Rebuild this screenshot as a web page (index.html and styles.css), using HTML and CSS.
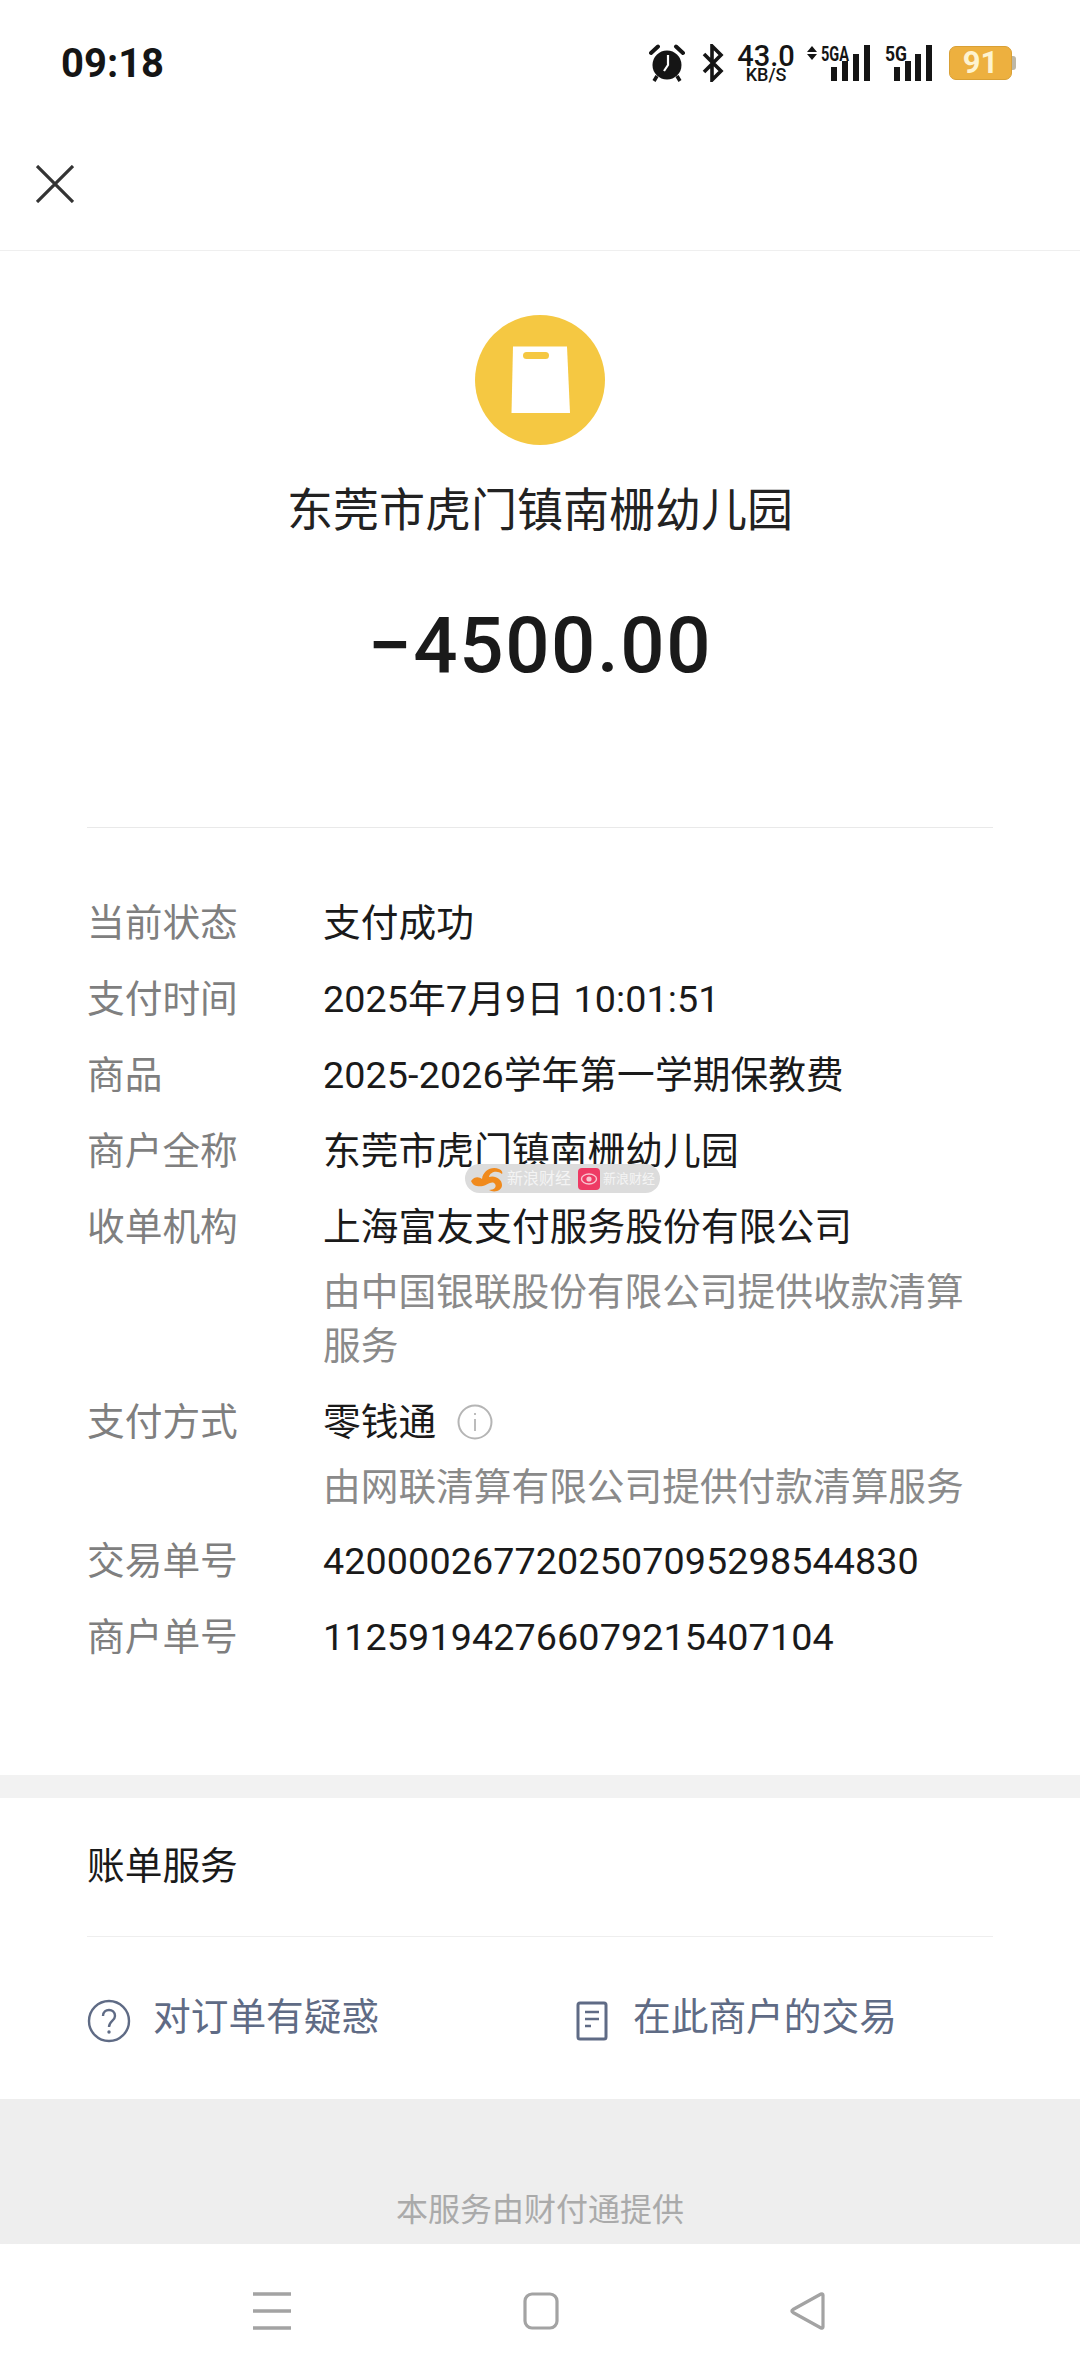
FILE: index.html
```html
<!DOCTYPE html>
<html lang="zh-CN">
<head>
  <meta charset="UTF-8" />
  <meta name="viewport" content="width=device-width, initial-scale=1.0" />
  <title>账单详情</title>
  <link rel="stylesheet" href="styles.css">
</head>
<body>

  <!-- Status bar -->
  <div class="status-bar">
    <span class="time">09:18</span>
    <div class="status-icons">
      <svg class="ic-alarm" width="36" height="38" viewBox="0 0 36 38">
        <circle cx="18" cy="21" r="14.5" fill="#151515"/>
        <path d="M2 9 L9 2.5 M34 9 L27 2.5" stroke="#151515" stroke-width="4" stroke-linecap="round"/>
        <path d="M8 32 L5 37 M28 32 L31 37" stroke="#151515" stroke-width="3.5"/>
        <path d="M19 11 V21 L15 27" fill="none" stroke="#fff" stroke-width="2.2"/>
      </svg>
      <svg class="ic-bt" width="22" height="38" viewBox="0 0 22 38">
        <path d="M2 10 L19 27 L10 36 V2 L19 11 L2 28" fill="none" stroke="#151515" stroke-width="3.6"/>
      </svg>
      <div class="speed">
        <div class="speed-num">43.0</div>
        <div class="speed-unit">KB/S</div>
      </div>
      <svg class="ic-sig1" width="63" height="42" viewBox="0 -6 63 42">
        <path d="M5 1 L10 7 H0 Z M5 15 L10 9 H0 Z" fill="#151515"/>
        <text x="14" y="16" class="sig-text" textLength="28" lengthAdjust="spacingAndGlyphs">5GA</text>
        <rect x="24" y="22" width="6" height="14" fill="#151515"/>
        <rect x="35" y="16" width="6" height="20" fill="#151515"/>
        <rect x="46" y="9" width="6" height="27" fill="#151515"/>
        <rect x="57" y="0" width="6" height="36" fill="#151515"/>
      </svg>
      <svg class="ic-sig2" width="47" height="42" viewBox="0 -6 47 42">
        <text x="0" y="16" class="sig-text" textLength="22" lengthAdjust="spacingAndGlyphs">5G</text>
        <rect x="9" y="22" width="6" height="14" fill="#151515"/>
        <rect x="20" y="16" width="6" height="20" fill="#151515"/>
        <rect x="30" y="9" width="6" height="27" fill="#151515"/>
        <rect x="41" y="0" width="6" height="36" fill="#151515"/>
      </svg>
      <div class="battery">
        <div class="battery-body">91</div>
        <div class="battery-nub"></div>
      </div>
    </div>
  </div>

  <!-- Close bar -->
  <div class="topbar">
    <svg width="38" height="38" viewBox="0 0 38 38">
      <path d="M1 1 L37 37 M37 1 L1 37" stroke="#333" stroke-width="3.2"/>
    </svg>
  </div>

  <!-- Merchant and amount -->
  <div class="hero">
    <div class="hero-icon">
      <svg width="59" height="68" viewBox="0 0 59 68">
        <path d="M2 0.5 H56 L59 67 H0.5 Z" fill="#fff"/>
        <rect x="12" y="6" width="26" height="7" rx="3.5" fill="#f5c842"/>
      </svg>
    </div>
    <div class="hero-name">东莞市虎门镇南栅幼儿园</div>
    <div class="hero-amount">−4500.00</div>
  </div>

  <!-- Details -->
  <div class="details">
    <div class="row">
      <div class="label">当前状态</div>
      <div class="value">支付成功</div>
    </div>
    <div class="row">
      <div class="label">支付时间</div>
      <div class="value">2025年7月9日 10:01:51</div>
    </div>
    <div class="row">
      <div class="label">商品</div>
      <div class="value">2025-2026学年第一学期保教费</div>
    </div>
    <div class="row">
      <div class="label">商户全称</div>
      <div class="value">
        东莞市虎门镇南栅幼儿园
        <!-- Repost watermark sits over the text -->
        <div class="watermark">
          <svg width="34" height="28" viewBox="0 0 34 28">
            <path d="M1 16 C5 11 9 12 12 14 C13 6 21 1 29 4 C32 5 33 8 32 9 C27 5 20 7 19 12 C25 10 32 14 32 20 C32 26 24 28 19 25 C24 25 27 22 25 19 C22 15 17 20 13 21 C8 22 3 21 1 16 Z" fill="#f08a1d"/>
          </svg>
          <span class="wm-text wm-text-a">新浪财经</span>
          <svg class="wm-pink" width="22" height="22" viewBox="0 0 22 22">
            <rect width="22" height="22" rx="4" fill="#ee3a64"/>
            <ellipse cx="11" cy="11" rx="7.500" ry="5" fill="none" stroke="#f9c6d2" stroke-width="1.400"/>
            <circle cx="11" cy="11" r="2.600" fill="#f9c6d2"/>
          </svg>
          <span class="wm-text">新浪财经</span>
        </div>
      </div>
    </div>
    <div class="row">
      <div class="label">收单机构</div>
      <div class="value">上海富友支付服务股份有限公司</div>
    </div>
    <div class="sub sub-first">由中国银联股份有限公司提供收款清算服务</div>
    <div class="row">
      <div class="label">支付方式</div>
      <div class="value value-flex">
        零钱通
        <svg class="ic-info" width="36" height="36" viewBox="0 0 36 36">
          <circle cx="18" cy="18" r="16.5" fill="none" stroke="#b5b5b5" stroke-width="2"/>
          <path d="M18 9 V11 M18 15 V27" stroke="#b5b5b5" stroke-width="1.8"/>
        </svg>
      </div>
    </div>
    <div class="sub">由网联清算有限公司提供付款清算服务</div>
    <div class="row">
      <div class="label">交易单号</div>
      <div class="value">4200002677202507095298544830</div>
    </div>
    <div class="row">
      <div class="label">商户单号</div>
      <div class="value">112591942766079215407104</div>
    </div>
  </div>

  <div class="band"></div>

  <!-- Bill services -->
  <div class="services">
    <div class="services-title">账单服务</div>
    <div class="services-links">
      <div class="link link-left">
        <svg width="44" height="44" viewBox="0 0 44 44">
          <circle cx="22" cy="22" r="20" fill="none" stroke="#5f6b85" stroke-width="2.4"/>
          <path d="M16 17 C16 9 28 9 28 17 C28 22 22 22 22 28" fill="none" stroke="#5f6b85" stroke-width="2.4"/>
          <circle cx="22" cy="33" r="1.7" fill="#5f6b85"/>
        </svg>
        <span>对订单有疑惑</span>
      </div>
      <div class="link">
        <svg width="32" height="40" viewBox="0 0 32 40">
          <rect x="2" y="2" width="28" height="36" rx="2" fill="none" stroke="#5f6b85" stroke-width="3"/>
          <path d="M9 11 H23 M9 18 H23 M9 25 H15" stroke="#5f6b85" stroke-width="2.6"/>
        </svg>
        <span>在此商户的交易</span>
      </div>
    </div>
  </div>

  <div class="provider">本服务由财付通提供</div>

  <!-- System navigation -->
  <div class="navbar">
    <svg width="38" height="38" viewBox="0 0 38 38">
      <path d="M0 2 H38 M0 19 H38 M0 36 H38" stroke="#a3a3a3" stroke-width="3.4"/>
    </svg>
    <svg width="36" height="38" viewBox="0 0 36 38">
      <rect x="2" y="2" width="32" height="34" rx="7" fill="none" stroke="#a3a3a3" stroke-width="3.2"/>
    </svg>
    <svg width="36" height="38" viewBox="0 0 36 38">
      <path d="M33 3 C33 1.800 32 1.500 31 2 L3 17.500 C1.500 18.500 1.500 19.500 3 20.500 L31 36 C32 36.500 33 36 33 35 Z" fill="none" stroke="#a3a3a3" stroke-width="3.2" stroke-linejoin="round"/>
    </svg>
  </div>

</body>
</html>
```

FILE: styles.css
```css
* {
  box-sizing: border-box;
}
body {
  margin: 0;
  width: 1080px;
  height: 2376px;
  overflow: hidden;
  background: #fff;
  color: #1a1a1a;
  font-family: Roboto, "Noto Sans CJK SC", sans-serif;
  font-size: 37.7px;
}

/* Status bar */
.status-bar {
  height: 124px;
  display: flex;
  align-items: center;
  padding: 2px 64px 0 61px;
}
.time {
  font-size: 40px;
  font-weight: 700;
  color: #151515;
}
.status-icons {
  margin-left: auto;
  display: flex;
  align-items: center;
}
.ic-bt {
  margin-left: 17px;
}
.speed {
  margin-left: 13px;
  width: 58px;
  text-align: center;
  font-weight: 500;
  color: #151515;
}
.speed-num {
  font-size: 29px;
  line-height: 23px;
}
.speed-unit {
  font-size: 18px;
  line-height: 14px;
}
.ic-sig1 {
  margin-left: 12px;
  margin-top: -6px;
}
.ic-sig2 {
  margin-left: 15px;
  margin-top: -6px;
}
.sig-text {
  font-family: Roboto, sans-serif;
  font-size: 20px;
  font-weight: 700;
  fill: #151515;
}
.battery {
  margin-left: 17px;
  display: flex;
  align-items: center;
}
.battery-body {
  width: 63px;
  height: 34px;
  border-radius: 7px;
  background: #edb03f;
  border: 1px solid #d9a035;
  color: #fdf3d0;
  font-size: 31px;
  font-weight: 700;
  line-height: 32px;
  text-align: center;
}
.battery-nub {
  width: 4px;
  height: 14px;
  background: #bdb7a6;
  border-radius: 0 3px 3px 0;
}

/* Close bar */
.topbar {
  height: 127px;
  padding: 41px 0 0 36px;
  border-bottom: 1px solid #efefef;
}
.topbar svg {
  display: block;
}

/* Merchant and amount */
.hero {
  display: flex;
  flex-direction: column;
  align-items: center;
  padding-top: 64px;
  height: 576px;
}
.hero-icon {
  width: 130px;
  height: 130px;
  border-radius: 50%;
  background: #f5c842;
  display: flex;
  align-items: center;
  justify-content: center;
}
.hero-name {
  margin-top: 35px;
  font-size: 46px;
  line-height: 60px;
  color: #222;
}
.hero-amount {
  margin-top: 61px;
  font-size: 78px;
  font-weight: 500;
  line-height: 90px;
  letter-spacing: 1.600px;
}

/* Details */
.details {
  margin: 0 87px;
  padding: 57px 0 100px;
  border-top: 1px solid #e9e9e9;
}
.row {
  display: flex;
  height: 76px;
  line-height: 76px;
}
.label {
  width: 236px;
  flex: none;
  color: #7f7f7f;
}
.value {
  position: relative;
  flex: 1;
  white-space: nowrap;
  letter-spacing: 0.100px;
}
.value-flex {
  display: flex;
  align-items: center;
}
.ic-info {
  margin-left: 21px;
}
.sub {
  margin-left: 236px;
  line-height: 54px;
  padding-bottom: 9px;
  color: #8a8a8a;
}
.sub-first {
  padding-bottom: 11px;
}
.watermark {
  position: absolute;
  z-index: 2;
  left: 142px;
  top: 51px;
  width: 195px;
  height: 29px;
  padding-left: 5px;
  display: flex;
  align-items: center;
  gap: 3px;
  border-radius: 15px;
  background: #dcdcdc;
  line-height: 1;
  letter-spacing: 0;
}
.wm-text {
  font-size: 13px;
  color: #f4f4f4;
}
.wm-text-a {
  width: 68px;
  font-size: 16px;
}
.wm-pink {
  flex: none;
}

.band {
  height: 23px;
  background: #f2f2f2;
}

/* Bill services */
.services {
  height: 301px;
  padding: 0 87px;
}
.services-title {
  height: 139px;
  padding-top: 30px;
  line-height: 76px;
  border-bottom: 1px solid #eeeeee;
}
.services-links {
  display: flex;
  padding-top: 46px;
  line-height: 68px;
  color: #5f6b85;
}
.link {
  display: flex;
  align-items: center;
  gap: 25px;
}
.link-left {
  width: 489px;
  gap: 22px;
}
.link svg {
  margin-top: 8px;
}

.provider {
  height: 145px;
  padding-top: 87px;
  background: #eeeeee;
  color: #aaaaaa;
  font-size: 32px;
  line-height: 48px;
  text-align: center;
}

/* System navigation */
.navbar {
  height: 133px;
  display: flex;
  align-items: center;
  padding-left: 253px;
}
.navbar svg:nth-child(2) {
  margin-left: 232px;
}
.navbar svg:nth-child(3) {
  margin-left: 231px;
}
```
